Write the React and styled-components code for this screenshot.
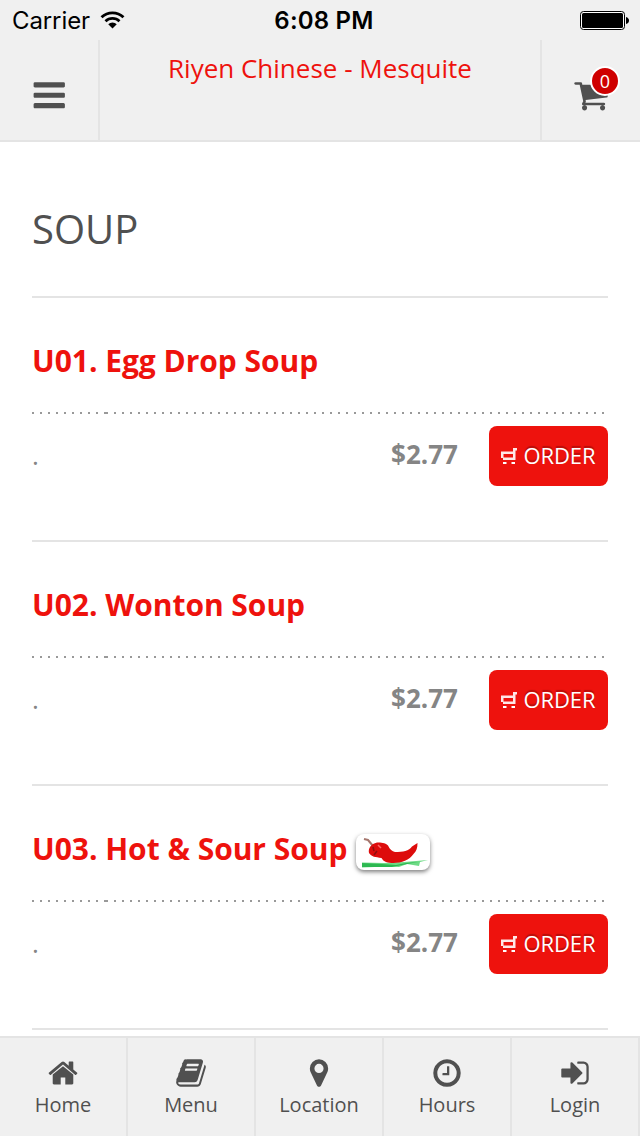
import React from 'react';
import styled, { createGlobalStyle } from 'styled-components';

const GlobalStyle = createGlobalStyle`
  * {
    box-sizing: border-box;
  }
  body {
    margin: 0;
    background: #fff;
    font-family: 'Open Sans', sans-serif;
    color: #505050;
  }
`;

const Screen = styled.div`
  display: flex;
  flex-direction: column;
  width: 640px;
  height: 1136px;
  overflow: hidden;
`;

const StatusBar = styled.div`
  display: grid;
  grid-template-columns: 1fr auto 1fr;
  align-items: center;
  height: 40px;
  padding: 0 11px 0 12px;
  background: #f0f0f0;
  color: #000;
  font-family: Inter, sans-serif;
  font-size: 24px;
  .carrier {
    display: flex;
    align-items: center;
    gap: 10px;
    letter-spacing: -0.1px;
  }
  .time {
    padding-left: 7px;
    font-weight: 600;
    letter-spacing: 0.2px;
  }
  .battery {
    justify-self: end;
    display: block;
  }
`;

const Header = styled.header`
  display: grid;
  grid-template-columns: 100px 1fr 100px;
  height: 102px;
  background: #f0f0f0;
  border-bottom: 2px solid #e4e4e4;
`;

const HeaderButton = styled.div`
  display: flex;
  align-items: center;
  justify-content: center;
  padding-top: 10px;
  border-${props => props.$divider}: 2px solid #e4e4e4;
`;

const Brand = styled.h1`
  margin: 0;
  padding-top: 10px;
  text-align: center;
  font-size: 26px;
  font-weight: 400;
  line-height: 36px;
  color: #ee120d;
`;

const Cart = styled.div`
  position: relative;
  height: 36px;
`;

const Badge = styled.span`
  position: absolute;
  top: -11px;
  right: -11px;
  width: 30px;
  height: 30px;
  border: 2px solid #fff;
  border-radius: 50%;
  background: #cf0000;
  color: #fff;
  font-size: 18px;
  line-height: 26px;
  text-align: center;
`;

const Content = styled.main`
  flex: 1;
  min-height: 0;
  overflow: hidden;
  padding: 0 32px;
`;

const Category = styled.h2`
  margin: 0;
  height: 156px;
  padding-top: 59px;
  border-bottom: 2px solid #e4e4e4;
  font-size: 40px;
  font-weight: 400;
  line-height: 56px;
`;

const Dish = styled.section`
  height: 244px;
  border-bottom: 2px solid #e4e4e4;
`;

const DishTitle = styled.h3`
  display: flex;
  gap: 9px;
  margin: 0;
  height: 116px;
  padding-top: 42px;
  font-size: 30px;
  font-weight: 700;
  line-height: 42px;
  letter-spacing: -0.03px;
  color: #ee120d;
  background:
    repeating-linear-gradient(90deg, #999 0 2px, transparent 2px 8px) 0 100% / 74px 2px no-repeat,
    repeating-linear-gradient(90deg, #999 0 2px, transparent 2px 8px) 74px 100% / 500px 2px no-repeat;
`;

const DishRow = styled.div`
  display: grid;
  grid-template-columns: 1fr auto 119px;
  padding-top: 12px;
  p {
    margin: 0;
    font-size: 26px;
    line-height: 58px;
    color: #858585;
  }
`;

const Price = styled.span`
  margin-right: 31px;
  font-size: 26px;
  font-weight: 700;
  line-height: 56px;
  color: #858585;
`;

const OrderButton = styled.button`
  display: flex;
  align-items: center;
  justify-content: center;
  gap: 7px;
  height: 60px;
  padding: 0 1px 2px 0;
  border: 0;
  border-radius: 8px;
  background: #ee120d;
  color: #fff;
  font-family: inherit;
  font-size: 22px;
  letter-spacing: -0.1px;
  text-shadow: 0 -2px 1px rgba(0, 0, 0, 0.25);
  svg {
    margin-top: 2px;
  }
`;

const SpicyTag = styled.span`
  width: 74px;
  height: 36px;
  margin-top: 6px;
  border-radius: 8px;
  background: #fff;
  box-shadow: 0 2px 4px rgba(0, 0, 0, 0.5);
  svg {
    display: block;
    filter: blur(0.6px);
  }
`;

const TabBar = styled.nav`
  display: grid;
  grid-template-columns: repeat(5, 1fr);
  height: 100px;
  border-top: 2px solid #e4e4e4;
  background: #f0f0f0;
`;

const Tab = styled.a`
  display: flex;
  flex-direction: column;
  align-items: center;
  padding-top: 18.5px;
  border-right: 2px solid #e4e4e4;
  font-size: 20px;
  line-height: 28px;
  svg {
    margin-bottom: 2.5px;
  }
`;

const paths = {
  bars:
    'M1664 1344v128q0 26-19 45t-45 19h-1408q-26 0-45-19t-19-45v-128q0-26 19-45t45-19h1408q26 0 45 19t19 45zm0-512v128q0 26-19 45t-45 19h-1408q-26 0-45-19t-19-45v-128q0-26 19-45t45-19h1408q26 0 45 19t19 45zm0-512v128q0 26-19 45t-45 19h-1408q-26 0-45-19t-19-45v-128q0-26 19-45t45-19h1408q26 0 45 19t19 45z',
  cart:
    'M704 1536q0 52-38 90t-90 38-90-38-38-90 38-90 90-38 90 38 38 90zm896 0q0 52-38 90t-90 38-90-38-38-90 38-90 90-38 90 38 38 90zm128-1088v512q0 24-16.5 42.5t-40.5 21.5l-1044 122q13 60 13 70 0 16-24 64h920q26 0 45 19t19 45-19 45-45 19h-1024q-26 0-45-19t-19-45q0-11 8-31.5t16-36 21.5-40 15.5-29.5l-177-823h-204q-26 0-45-19t-19-45 19-45 45-19h256q16 0 28.5 6.5t19.5 15.5 13 24.5 8 26 5.5 29.5 4.5 26h1201q26 0 45 19t19 45z',
  home:
    'M1472 992v480q0 26-19 45t-45 19h-384v-384h-256v384h-384q-26 0-45-19t-19-45v-480q0-1 .5-3t.5-3l575-474 575 474q1 2 1 6zm223-69l-62 74q-8 9-21 11h-3q-13 0-21-7l-692-577-692 577q-12 8-24 7-13-2-21-11l-62-74q-8-10-7-23.5t11-21.5l719-599q32-26 76-26t76 26l244 204v-195q0-14 9-23t23-9h192q14 0 23 9t9 23v408l219 182q10 8 11 21.5t-7 23.5z',
  book:
    'M1703 478q40 57 18 129l-275 906q-19 64-76.5 107.5t-122.5 43.5h-923q-77 0-148.5-53.5t-99.5-131.5q-24-67-2-127 0-4 3-27t4-37q1-8-3-21.5t-3-19.5q2-11 8-21t16.5-23.5 16.5-23.5q23-38 45-91.5t30-91.5q3-10 .5-30t-.5-28q3-11 17-28t17-23q21-36 42-92t25-90q1-9-2.5-32t.5-28q4-13 22-30.5t22-22.5q19-26 42.5-84.5t27.5-96.5q1-8-3-25.5t-2-26.5q2-8 9-18t18-23 17-21q8-12 16.5-30.5t15-35 16-36 19.5-32 26.5-23.5 36-11.5 47.5 5.5l-1 3q38-9 51-9h761q74 0 114 56t18 130l-274 906q-36 119-71.5 153.5t-128.5 34.5h-869q-27 0-38 15-11 16-1 43 24 70 144 70h923q29 0 56-15.5t35-41.5l300-987q7-22 5-57 38 15 59 43zm-1064 2q-4 13 2 22.5t20 9.5h608q13 0 25.5-9.5t16.5-22.5l21-64q4-13-2-22.5t-20-9.5h-608q-13 0-25.5 9.5t-16.5 22.5zm-83 256q-4 13 2 22.5t20 9.5h608q13 0 25.5-9.5t16.5-22.5l21-64q4-13-2-22.5t-20-9.5h-608q-13 0-25.5 9.5t-16.5 22.5z',
  marker:
    'M1152 640q0-106-75-181t-181-75-181 75-75 181 75 181 181 75 181-75 75-181zm256 0q0 109-33 179l-364 774q-16 33-47.5 52t-67.5 19-67.5-19-46.5-52l-365-774q-33-70-33-179 0-212 150-362t362-150 362 150 150 362z',
  clock:
    'M1024 544v448q0 14-9 23t-23 9h-320q-14 0-23-9t-9-23v-64q0-14 9-23t23-9h224v-352q0-14 9-23t23-9h64q14 0 23 9t9 23zm416 352q0-148-73-273t-198-198-273-73-273 73-198 198-73 273 73 273 198 198 273 73 273-73 198-198 73-273zm224 0q0 209-103 385.5t-279.5 279.5-385.5 103-385.5-103-279.5-279.5-103-385.5 103-385.5 279.5-279.5 385.5-103 385.5 103 279.5 279.5 103 385.5z',
  signIn:
    'M1312 896q0 26-19 45l-544 544q-19 19-45 19t-45-19-19-45v-288h-448q-26 0-45-19t-19-45v-384q0-26 19-45t45-19h448v-288q0-26 19-45t45-19 45 19l544 544q19 19 19 45zm352-352v704q0 119-84.5 203.5t-203.5 84.5h-320q-13 0-22.5-9.5t-9.5-22.5q0-4-1-20t-.5-26.5 3-23.5 10-19.5 20.5-6.5h320q66 0 113-47t47-113v-704q0-66-47-113t-113-47h-312l-11.5-1-11.5-3-8-5.5-7-9-2-13.5q0-4-1-20t-.5-26.5 3-23.5 10-19.5 20.5-6.5h320q119 0 203.5 84.5t84.5 203.5z',
};

const Icon = ({ name, size }) => (
  <svg width={size} height={size} viewBox="0 0 1792 1792" fill="#505050">
    <path d={paths[name]} />
  </svg>
);

const Wifi = () => (
  <svg width="25" height="20" viewBox="0 0 26 20" fill="none" stroke="#000">
    <path d="M1.6 7.2a16.5 16.5 0 0 1 22.8 0" strokeWidth="3" />
    <path d="M5.7 11.3a10.6 10.6 0 0 1 14.6 0" strokeWidth="2.8" />
    <path d="M8.6 14.3a6.4 6.4 0 0 1 8.8 0L13 18.8z" fill="#000" stroke="none" />
  </svg>
);

const Battery = () => (
  <svg className={'battery'} width="49" height="19" viewBox="0 0 49 19">
    <rect x="0.5" y="0.5" width="44" height="18" rx="3" fill="#fff" stroke="#000" />
    <rect x="2" y="2" width="41" height="15" rx="1.5" />
    <path d="M46 6q3 1 3 3.5t-3 3.5z" />
  </svg>
);

const SmallCart = () => (
  <svg width="16" height="16" viewBox="0 0 16 16" fill="#fff">
    <path d="M12 0h4v2.5h-1.5V12H2v-2H0V3.5h12zM2.5 6v3.5H12V6z" fillRule="evenodd" opacity=".9" />
    <path d="M2 14h3.5v2H2zM10.500 14H14v2h-3.500z" />
  </svg>
);

const Chili = () => (
  <svg width="74" height="36" viewBox="0 0 74 36">
    <path d="M6 28.5l22 .5 20-1 24-2-8 2-1 4-12-2-8 3-12-.5L6 33.5z" fill="#6edb86" />
    <path d="M6 29l20 1 14 1 10-2 12-1-16 3-10 2H6z" fill="#2cb851" />
    <path d="M8 5l4 1 5 6" fill="none" stroke="#a5776e" strokeWidth="2" />
    <path
      d="M13 19c-1-5 2-9 8-10.5 4 0 8 0 11 3 2 4 4 6 7 6.500 8 0 14-1 17-5.500l5.500-3.500c0 5-1 8-4 11-4 6-12 9-20 9-6 0-10-1-12-5-6-1-10-1-12.500-5z"
      fill="#dd0c0c"
    />
    <path d="M17 13l1 4M21 17l-3 4" stroke="#8e1010" strokeWidth="1.5" />
    <path d="M22 11l3 3" stroke="#f66" strokeWidth="1.5" />
  </svg>
);

const dishes = [
  { title: 'U01. Egg Drop Soup', price: '$2.77' },
  { title: 'U02. Wonton Soup', price: '$2.77' },
  { title: 'U03. Hot & Sour Soup', price: '$2.77', spicy: true },
];

const tabs = [
  { label: 'Home', icon: 'home' },
  { label: 'Menu', icon: 'book' },
  { label: 'Location', icon: 'marker' },
  { label: 'Hours', icon: 'clock' },
  { label: 'Login', icon: 'signIn' },
];

const App = () => (
  <Screen>
    <GlobalStyle />
    <StatusBar>
      <div className={'carrier'}>
        Carrier
        <Wifi />
      </div>
      <div className={'time'}>6:08 PM</div>
      <Battery />
    </StatusBar>
    <Header>
      <HeaderButton $divider="right">
        <Icon name="bars" size={36.5} />
      </HeaderButton>
      <Brand>Riyen Chinese - Mesquite</Brand>
      <HeaderButton $divider="left">
        <Cart>
          <Icon name="cart" size={36} />
          <Badge>0</Badge>
        </Cart>
      </HeaderButton>
    </Header>
    <Content>
      <Category>SOUP</Category>
      {dishes.map(dish => (
        <Dish key={dish.title}>
          <DishTitle>
            {dish.title}
            {dish.spicy && (
              <SpicyTag>
                <Chili />
              </SpicyTag>
            )}
          </DishTitle>
          <DishRow>
            <p>.</p>
            <Price>{dish.price}</Price>
            <OrderButton>
              <SmallCart />
              ORDER
            </OrderButton>
          </DishRow>
        </Dish>
      ))}
    </Content>
    <TabBar>
      {tabs.map(tab => (
        <Tab key={tab.label}>
          <Icon name={tab.icon} size={32} />
          {tab.label}
        </Tab>
      ))}
    </TabBar>
  </Screen>
);

export default App;
